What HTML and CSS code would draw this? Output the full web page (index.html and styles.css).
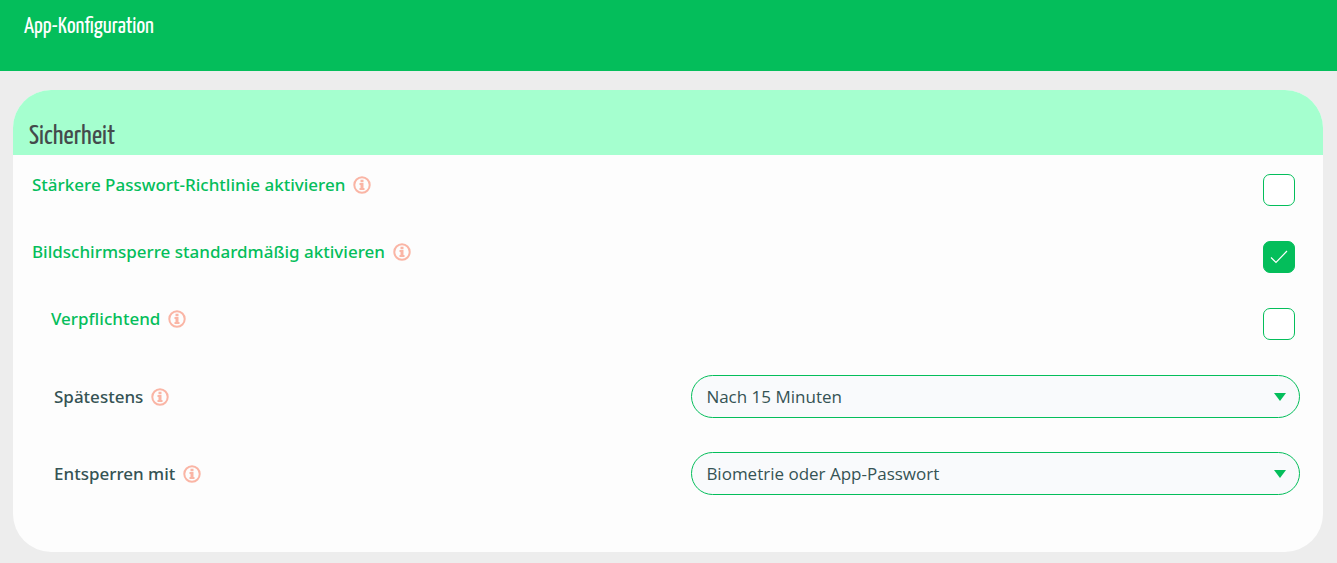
FILE: index.html
```html
<!DOCTYPE html>
<html lang="de">
<head>
    <meta charset="utf-8">
    <meta name="viewport" content="width=device-width, initial-scale=1.0">
    <title>App-Konfiguration</title>
    <link rel="stylesheet" href="styles.css">
</head>
<body>
    <svg class="sprite" aria-hidden="true">
        <symbol id="icon-info" viewBox="0 0 18 18">
            <circle cx="9" cy="9" r="7.7" fill="none" stroke="currentColor" stroke-width="2"/>
            <path fill="currentColor" d="M7.5 3.7h3v2.6h-3zM6.5 7h4v5h1v1.9h-5V12h1V8.9h-1z"/>
        </symbol>
    </svg>

    <header class="page-header">
        <h1>App-Konfiguration</h1>
    </header>

    <main>
        <section class="card">
            <div class="card-header">
                <h2>Sicherheit</h2>
            </div>

            <form class="card-body">
                <div class="row">
                    <div class="row-label">
                        <label for="strong-password">Stärkere Passwort-Richtlinie aktivieren</label>
                        <svg class="info"><use href="#icon-info"/></svg>
                    </div>
                    <input type="checkbox" id="strong-password">
                </div>

                <div class="row">
                    <div class="row-label">
                        <label for="screen-lock">Bildschirmsperre standardmäßig aktivieren</label>
                        <svg class="info"><use href="#icon-info"/></svg>
                    </div>
                    <input type="checkbox" id="screen-lock" checked>
                </div>

                <div class="row row-sub">
                    <div class="row-label">
                        <label for="mandatory">Verpflichtend</label>
                        <svg class="info"><use href="#icon-info"/></svg>
                    </div>
                    <input type="checkbox" id="mandatory">
                </div>

                <div class="row row-select">
                    <div class="row-label">
                        <label for="latest">Spätestens</label>
                        <svg class="info"><use href="#icon-info"/></svg>
                    </div>
                    <select id="latest">
                        <option>Nach 15 Minuten</option>
                    </select>
                </div>

                <div class="row row-select">
                    <div class="row-label">
                        <label for="unlock">Entsperren mit</label>
                        <svg class="info"><use href="#icon-info"/></svg>
                    </div>
                    <select id="unlock">
                        <option>Biometrie oder App-Passwort</option>
                    </select>
                </div>
            </form>
        </section>
    </main>
</body>
</html>
```
FILE: styles.css
```css
:root {
    --green: #04be5b;
    --light-green: #a5ffcf;
    --info: #fab5a5;
    --text: #355354;
    --background: #ededed;
    --card-bg: #fdfdfd;
}

* {
    margin: 0;
    padding: 0;
    box-sizing: border-box;
}

body {
    font-family: 'Segoe UI', 'Open Sans', sans-serif;
    font-size: 17px;
    line-height: 22px;
    background: var(--background);
    color: var(--text);
}

.sprite {
    display: none;
}

h1,
h2 {
    font-family: 'Yanone Kaffeesatz', 'Liberation Sans Narrow', sans-serif;
    font-weight: 400;
}

.page-header {
    background: var(--green);
    color: #fff;
    padding: 15px 24px 32px;
}

h1 {
    font-size: 23px;
    line-height: 24px;
}

main {
    padding: 19px 14px 11px 13px;
}

.card {
    background: var(--card-bg);
    border-radius: 38px;
    overflow: hidden;
}

.card-header {
    background: var(--light-green);
    color: #444b4c;
    padding: 31px 16px 2px;
}

h2 {
    font-size: 28px;
    line-height: 32px;
}

.card-body {
    display: flex;
    flex-direction: column;
    gap: 34px;
    padding: 19px 23px 57px 19px;
}

.row {
    display: flex;
    justify-content: space-between;
    align-items: flex-start;
}

.row-label {
    display: flex;
    align-items: center;
    gap: 8px;
    color: var(--green);
    font-family: 'Segoe UI', 'Noto Sans', sans-serif;
    font-weight: 500;
}

.row-sub .row-label {
    padding-left: 19px;
}

.row-select {
    align-items: center;
}

.row-select .row-label {
    padding-left: 22px;
    color: var(--text);
}

.info {
    width: 18px;
    height: 18px;
    color: var(--info);
}

input[type="checkbox"] {
    appearance: none;
    width: 32px;
    height: 32px;
    margin: 0 5px 1px 0;
    border: 1px solid var(--green);
    border-radius: 7px;
    background: #fff;
}

input[type="checkbox"]:checked {
    background: var(--green) url("data:image/svg+xml,%3Csvg xmlns='http://www.w3.org/2000/svg' viewBox='0 0 18 14'%3E%3Cpath d='M1 7.5l5 5L17 1' fill='none' stroke='white' stroke-width='1.2'/%3E%3C/svg%3E") center / 18px 14px no-repeat;
}

select {
    appearance: none;
    width: 48%;
    height: 43px;
    padding: 0 40px 0 14px;
    border: 1px solid var(--green);
    border-radius: 22px;
    background: #f9fafc url("data:image/svg+xml,%3Csvg xmlns='http://www.w3.org/2000/svg' viewBox='0 0 12 8'%3E%3Cpath d='M0 0h12L6 8z' fill='%2304be5b'/%3E%3C/svg%3E") right 13px center / 12px 8px no-repeat;
    color: var(--text);
    font: inherit;
}
```
